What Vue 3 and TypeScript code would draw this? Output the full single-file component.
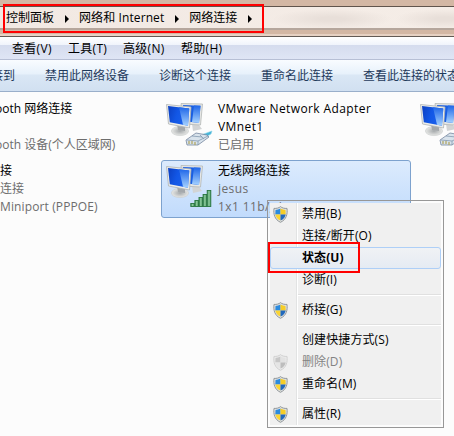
<script setup lang="ts">
interface Entry {
  label?: string
  shield?: 'on' | 'off'
  kind?: 'sep' | 'hover' | 'disabled'
}
const crumbs: string[] = ['控制面板', '网络和 Internet', '网络连接']
const menus: string[] = ['查看(V)', '工具(T)', '高级(N)', '帮助(H)']
const commands: string[] = ['接到', '禁用此网络设备', '诊断这个连接', '重命名此连接', '查看此连接的状态']
const entries: Entry[] = [
  { label: '禁用(B)', shield: 'on' },
  { label: '连接/断开(O)' },
  { label: '状态(U)', kind: 'hover' },
  { label: '诊断(I)' },
  { kind: 'sep' },
  { label: '桥接(G)', shield: 'on' },
  { kind: 'sep' },
  { label: '创建快捷方式(S)' },
  { label: '删除(D)', shield: 'off', kind: 'disabled' },
  { label: '重命名(M)', shield: 'on' },
  { kind: 'sep' },
  { label: '属性(R)', shield: 'on' },
]
const bars: number[] = [3, 6, 9, 12, 16]
</script>

<template>
  <div class="window">
    <svg class="defs" width="0" height="0">
      <defs>
        <linearGradient id="scr" x1="0" y1="0" x2="1" y2=".3">
          <stop offset="0" stop-color="#0c3fc0" />
          <stop offset=".5" stop-color="#1257e6" />
          <stop offset="1" stop-color="#1c62ec" />
        </linearGradient>
        <linearGradient id="glare" x1="0" y1="0" x2="0" y2="1">
          <stop offset="0" stop-color="#1f66e8" />
          <stop offset="1" stop-color="#a5d2ff" />
        </linearGradient>
        <linearGradient id="bar" x1="0" y1="0" x2="1" y2="0">
          <stop offset="0" stop-color="#3c9157" />
          <stop offset=".5" stop-color="#91cda0" />
          <stop offset="1" stop-color="#3a8e53" />
        </linearGradient>
        <radialGradient id="base">
          <stop offset="0" stop-color="#a6aaac" />
          <stop offset="1" stop-color="#e7e8e6" />
        </radialGradient>
        <g id="pc">
          <path d="M26 21l7 1 3 4-9 2z" fill="#d2d4d5" />
          <path d="M15 .5L36.5 1 34.5 22 17 21z" fill="#e6e7e5" stroke="#b4b7b6" stroke-width=".8" />
          <path d="M17 2L34.5 2.8 33 20 18 18z" fill="#1a5fe2" />
          <path d="M28 2.5L34.5 2.8 33 20 26 19z" fill="url(#glare)" />
          <ellipse cx="14" cy="28" rx="8.6" ry="4.6" fill="url(#base)" stroke="#c8cbcb" stroke-width=".6" />
          <path d="M11 21l8 1 0 6-7-1z" fill="#a4a8ab" />
          <path d="M.5 1.5L25 4 23.5 25 2.5 21z" fill="#ecedea" stroke="#b0b4b4" stroke-width=".8" />
          <path d="M2 3L23.3 5.4 22 22.8 3.8 19.3z" fill="url(#scr)" />
          <path d="M13 4.2L23.3 5.4 22 22.8 17 21.8z" fill="url(#glare)" />
        </g>
        <g id="plug">
          <path d="M35 32L46 28 45 31 38 35z" fill="#45b4d8" stroke="#8ed4e8" stroke-width=".6" />
          <path d="M20 37L30 30 41 32 43 34 32 42 21 42z" fill="#d9e3ec" stroke="#7788a0" stroke-width=".8" />
          <path d="M21 37l11 1 10-5M32 38v4M26 33l10 1M34 32l4 4" fill="none" stroke="#8499b0" stroke-width=".8" />
          <path d="M23 38v3M26 38v3M29 39v3" stroke="#b2a968" stroke-width="1.3" />
        </g>
        <symbol id="shield" viewBox="0 0 15 17">
          <path d="M7.5 .6C6 2 3.5 2.6 1 2.4.3 8 1.5 13.5 7.5 16.3 13.5 13.5 14.7 8 14 2.4 11.5 2.6 9 2 7.5 .6z" fill="#dfe1e2" stroke="#92979a" />
          <path d="M7.5 2.5C6 3.4 4 3.9 2.5 3.9L2.3 8.4H7.5z" fill="#2a8ade" />
          <path d="M7.5 2.5C9 3.4 11 3.9 12.5 3.9L12.7 8.4H7.5z" fill="#f6cd27" />
          <path d="M2.3 8.4H7.5V14.6C4.3 13 2.8 11 2.3 8.4z" fill="#fbd432" />
          <path d="M12.7 8.4H7.5V14.6C10.7 13 12.2 11 12.7 8.4z" fill="#2169bd" />
        </symbol>
      </defs>
    </svg>

    <header class="address">
      <nav class="crumbs">
        <span v-for="c in crumbs" :key="c" class="crumb">{{ c }}
          <svg width="4" height="8" viewBox="0 0 4 8"><path d="M0 0L4 4 0 8z" /></svg>
        </span>
      </nav>
    </header>
    <nav class="menubar"><span v-for="m in menus" :key="m">{{ m }}</span></nav>
    <nav class="toolbar"><span v-for="c in commands" :key="c">{{ c }}</span></nav>

    <main class="grid">
      <div class="conn cut">
        <p class="name shifted">ooth 网络连接</p>
        <p>&nbsp;</p>
        <p class="shifted">ooth 设备(个人区域网)</p>
      </div>
      <div class="conn">
        <svg class="icon" width="50" height="48"><use href="#pc" /><use href="#plug" /></svg>
        <div class="info">
          <p class="name wide">VMware Network Adapter</p>
          <p class="name wide">VMnet1</p>
          <p>已启用</p>
        </div>
      </div>
      <div class="conn">
        <svg class="icon" width="50" height="48"><use href="#pc" /><use href="#plug" /></svg>
      </div>
      <div class="conn cut">
        <p class="name">接</p>
        <p>连接</p>
        <p class="mini">Miniport (PPPOE)</p>
      </div>
      <div class="conn selected">
        <svg class="icon" width="50" height="48">
          <use href="#pc" />
          <rect
            v-for="(h, i) in bars" :key="h" :x="24.8 + i * 4.1" :y="41.5 - h" width="3.6" :height="h"
            fill="url(#bar)" stroke="#28763f" stroke-width=".9"
          />
        </svg>
        <div class="info">
          <p class="name">无线网络连接</p>
          <p class="wide">jesus</p>
          <p class="wide">1x1 11b/g/n</p>
        </div>
      </div>
    </main>

    <div class="popup">
      <template v-for="(e, i) in entries" :key="i">
        <div v-if="e.kind === 'sep'" class="sep"><i></i></div>
        <div v-else class="entry" :class="e.kind">
          <span class="gutter">
            <svg v-if="e.shield" class="shield" :class="e.shield" width="15" height="17"><use href="#shield" /></svg>
          </span>
          <span class="label">{{ e.label }}</span>
        </div>
      </template>
    </div>
    <div class="mark mark-path"></div>
    <div class="mark mark-status"></div>
  </div>
</template>

<style>
body { margin: 0; overflow: hidden; }
</style>
<style scoped>
.window {
  position: relative;
  width: 454px;
  height: 436px;
  overflow: hidden;
  background: #fcfcfc;
  color: #000;
  font: 12px/18px "Open Sans", "Noto Sans CJK SC", sans-serif;
  white-space: nowrap;
}
.defs { position: absolute; }
.address {
  box-sizing: border-box;
  height: 37px;
  padding-top: 6px;
  background: linear-gradient(#d3b7a4 0 34px, #e6d1c3 34px 36px, #625a55 36px);
}
.crumbs {
  box-sizing: border-box;
  display: flex;
  height: 24px;
  padding: 1px 0 0 6px;
  border-top: 1px solid #60544c;
  border-bottom: 2px solid #b5a69c;
  background:
    radial-gradient(ellipse 60px 10px at 332px 12px, #e8dfd9 20%, transparent),
    radial-gradient(ellipse 50px 10px at 445px 12px, #e8dfd9 20%, transparent),
    linear-gradient(90deg, #f2e9e3, #f5ede7);
}
.crumb { display: flex; align-items: center; height: 19px; margin-right: 10px; }
.crumb:nth-child(2) { letter-spacing: .1px; }
.crumb svg { margin: 2px 0 0 11px; }
.menubar {
  box-sizing: border-box;
  display: grid;
  grid-template-columns: 56px 55px 58px auto;
  height: 23px;
  padding: 3px 0 0 12px;
  border-bottom: 1px solid #b7bfd5;
  background: linear-gradient(#fff 0, #f0f4fb 8px, #d5dcee 8px, #dfe5f5);
}
.menubar span { letter-spacing: .3px; }
.toolbar {
  box-sizing: border-box;
  display: grid;
  grid-template-columns: 54px 114px 102px 102px auto;
  height: 32px;
  margin-left: -9px;
  padding: 7px 0 0;
  border-bottom: 1px solid #9aafca;
  background: linear-gradient(#f9fcff, #e7f1fb 14px, #dae7f5 15px, #d1e0f1);
  color: #1e395b;
}
.grid {
  display: grid;
  grid-template-columns: 160px 254px 254px;
  grid-template-rows: 57px 57px;
  row-gap: 5px;
  padding-top: 6px;
}
.conn {
  box-sizing: border-box;
  display: flex;
  width: 250px;
  height: 58px;
  margin-left: 1px;
  padding: 1px 0 0 4px;
  border: 1px solid transparent;
  color: #6d6d6d;
}
.cut { display: block; width: 160px; margin: 0; padding: 1px 0 0; border-left: 0; }
.icon { flex: none; margin-top: 3px; overflow: visible; }
.info { margin-left: 2px; }
p { margin: 0; }
.name { color: #000; }
.wide { letter-spacing: .4px; }
.mini { letter-spacing: .12px; }
.shifted { margin-left: -5px; }
.selected {
  border-color: #7da2ce;
  border-radius: 3px;
  background: linear-gradient(#dcebfd, #c1dbfc);
}
.popup {
  position: absolute;
  left: 267px;
  top: 200px;
  box-sizing: border-box;
  width: 177px;
  height: 228px;
  padding: 2px;
  border: 1px solid #979797;
  background: linear-gradient(90deg, #f0f0f0 26px, #e2e3e3 26px 27px, #fff 27px 28px, #f0f0f0 28px) content-box #f0f0f0;
}
.entry {
  box-sizing: border-box;
  display: flex;
  align-items: center;
  height: 22px;
  border: 1px solid transparent;
  border-radius: 3px;
}
.label { letter-spacing: .1px; }
.hover { border-color: #aecff7; background: linear-gradient(#f0f2f5, #e5ebf3); font-weight: 700; }
.disabled { color: #838383; }
.gutter { display: flex; width: 31px; padding-left: 3px; box-sizing: border-box; }
.shield { margin: 1px 0 0 -1px; }
.off { filter: grayscale(1); opacity: .35; }
.sep { display: flex; align-items: center; height: 8px; padding-left: 28px; }
.sep i { width: 100%; height: 1px; background: #e0e0e0; border-bottom: 1px solid #fff; }
.mark { position: absolute; box-sizing: border-box; border: 2px solid #f00; }
.mark-path { left: 3px; top: 4px; width: 261px; height: 29px; }
.mark-status { left: 268px; top: 242px; width: 92px; height: 31px; }
</style>
